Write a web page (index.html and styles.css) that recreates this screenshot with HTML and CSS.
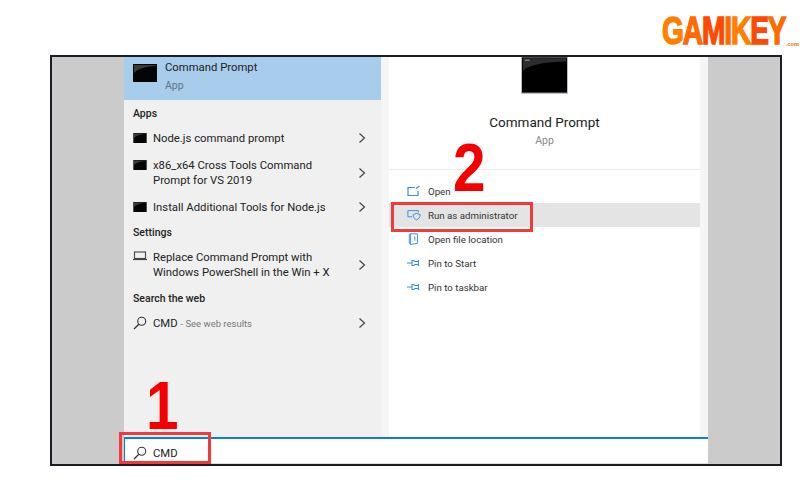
FILE: index.html
```html
<!DOCTYPE html>
<html lang="en">
<head>
    <meta charset="UTF-8">
    <title>Run Command Prompt as administrator</title>
    <link rel="stylesheet" href="styles.css">
</head>
<body>
    <svg class="sprites" width="0" height="0">
        <symbol id="console" viewBox="0 0 24 18">
            <rect width="24" height="18" fill="#050505"/>
            <path d="M1 9C6 4 14 2.500 23 2V1H1z" fill="#3a3a3a"/>
        </symbol>
        <symbol id="chevron" viewBox="0 0 8 12">
            <path d="M1.500 1.500 6.500 6l-5 4.500" fill="none" stroke="#444" stroke-width="1.200"/>
        </symbol>
        <symbol id="search" viewBox="0 0 14 14">
            <circle cx="8.700" cy="5.300" r="4" fill="none" stroke="#333" stroke-width="1.100"/>
            <path d="M5.800 8.200 1 13" fill="none" stroke="#333" stroke-width="1.300"/>
        </symbol>
        <symbol id="pin" viewBox="0 0 14 10">
            <path d="M0 5h5M5 2.500h1.500L8 3.500h3.500V2.500M5 7.500h1.500L8 6.500h3.500v1M5 2v6M11.500 2v6" fill="none" stroke="#3a8fdc" stroke-width="1.100"/>
        </symbol>
    </svg>

    <header class="brand">
        <div class="logo">
            <div class="logo-word"><span class="c1">G</span><span class="c2">A</span><span class="c3">M</span><span class="c2">I</span><span class="c1">K</span><span class="c3">E</span><span class="c2">Y</span></div>
            <small>.com</small>
        </div>
    </header>

    <main class="frame">
        <div class="start">
            <div class="panels">
                <section class="results">
                    <div class="best">
                        <svg class="best-icon"><use href="#console"/></svg>
                        <div>
                            <div class="best-name">Command Prompt</div>
                            <div class="best-type">App</div>
                        </div>
                    </div>

                    <h4>Apps</h4>
                    <div class="row">
                        <svg class="row-icon"><use href="#console"/></svg>
                        <span class="row-text">Node.js command prompt</span>
                        <svg class="chevron"><use href="#chevron"/></svg>
                    </div>
                    <div class="row tall">
                        <svg class="row-icon top"><use href="#console"/></svg>
                        <span class="row-text">x86_x64 Cross Tools Command<br>Prompt for VS 2019</span>
                        <svg class="chevron"><use href="#chevron"/></svg>
                    </div>
                    <div class="row last">
                        <svg class="row-icon"><use href="#console"/></svg>
                        <span class="row-text">Install Additional Tools for Node.js</span>
                        <svg class="chevron"><use href="#chevron"/></svg>
                    </div>

                    <h4>Settings</h4>
                    <div class="row tall">
                        <svg class="row-icon top" viewBox="0 0 14 10">
                            <rect x="1.500" y="1" width="11" height="6.500" fill="none" stroke="#444" stroke-width="1.100"/>
                            <path d="M0 8.500h14" stroke="#444" stroke-width="1.200"/>
                        </svg>
                        <span class="row-text">Replace Command Prompt with<br>Windows PowerShell in the Win + X</span>
                        <svg class="chevron"><use href="#chevron"/></svg>
                    </div>

                    <h4>Search the web</h4>
                    <div class="row">
                        <svg class="row-icon glass"><use href="#search"/></svg>
                        <span class="row-text">CMD <em>- See web results</em></span>
                        <svg class="chevron"><use href="#chevron"/></svg>
                    </div>
                </section>

                <section class="details">
                    <div class="preview">
                        <svg class="preview-icon" viewBox="0 0 47 37">
                            <rect width="47" height="37" fill="#000"/>
                            <path d="M1 14C9 7 26 5 46 4.500V1H1z" fill="#2c2c2c"/>
                            <path d="M3 3h5" stroke="#aaa"/>
                        </svg>
                        <div class="preview-name">Command Prompt</div>
                        <div class="preview-type">App</div>
                    </div>
                    <ul class="actions">
                        <li>
                            <svg viewBox="0 0 14 12"><path d="M8 2.500H1v8h10V6M9 3.500 12.500 1" fill="none" stroke="#3a8fdc" stroke-width="1.200"/></svg>
                            Open
                        </li>
                        <li class="active">
                            <svg viewBox="0 0 16 12"><path d="M6 8H1V1h12v2" fill="none" stroke="#3a8fdc" stroke-width="1.100"/><path d="M7 5.500 11 4l4 1.500c0 3-1.500 5-4 6-2.500-1-4-3-4-6z" fill="none" stroke="#3a8fdc" stroke-width="1.100"/></svg>
                            Run as administrator
                        </li>
                        <li>
                            <svg viewBox="0 0 14 14"><path d="M3 1h8v11l-8 1.500zM3 1 1.500 2v10L3 13.500M7 5l1-.5V9" fill="none" stroke="#3a8fdc" stroke-width="1.100"/></svg>
                            Open file location
                        </li>
                        <li><svg><use href="#pin"/></svg>Pin to Start</li>
                        <li><svg><use href="#pin"/></svg>Pin to taskbar</li>
                    </ul>
                </section>
            </div>
            <div class="searchbar">
                <svg class="glass"><use href="#search"/></svg>
                <span>CMD</span>
            </div>
        </div>

        <div class="step step-one">1</div>
        <div class="step step-two">2</div>
        <div class="mark mark-one"></div>
        <div class="mark mark-two"></div>
    </main>
</body>
</html>
```
FILE: styles.css
```css
* {
    box-sizing: border-box;
}

body {
    margin: 0;
    width: 800px;
    height: 500px;
    overflow: hidden;
    background: #fff;
    font-family: Roboto, sans-serif;
    color: #222;
}

.sprites {
    position: absolute;
}

.brand {
    height: 55px;
    display: flex;
    justify-content: flex-end;
    padding: 15px 1px 0 0;
}

.logo {
    width: 137px;
    height: 36px;
    display: flex;
    align-items: flex-end;
}

.logo-word {
    width: 124px;
    flex: none;
    font-family: "Liberation Sans", sans-serif;
    font-weight: 700;
    font-size: 39px;
    line-height: 40px;
    letter-spacing: -1.500px;
    white-space: nowrap;
    -webkit-text-stroke: 1.500px currentColor;
    transform: scaleX(.72);
    transform-origin: left center;
}

.logo small {
    font-family: "Liberation Sans", sans-serif;
    font-weight: 700;
    font-size: 5.500px;
    line-height: 8px;
    margin-bottom: 3px;
    color: #f26a00;
}

.c1 {
    color: #ff8000;
}

.c2 {
    color: #ff6a00;
}

.c3 {
    color: #ff4800;
}

.frame {
    position: relative;
    margin-left: 50px;
    width: 732px;
    height: 411px;
    background: #cbcbcb;
    border: 2px solid #1c1c24;
    padding-left: 72px;
    padding-right: 72px;
}

.start {
    height: 100%;
    display: flex;
    flex-direction: column;
}

.panels {
    flex: 1;
    display: flex;
    background: #f5f5f5;
}

.results {
    width: 257px;
    background: #f0f0f0;
}

.best {
    height: 43px;
    background: #a8cceb;
    display: flex;
    padding-left: 9px;
    gap: 8px;
}

.best-icon {
    width: 24px;
    height: 18px;
    margin-top: 7px;
}

.best-name {
    font-size: 11.300px;
    line-height: 18px;
    margin-top: 2px;
}

.best-type {
    font-size: 10.500px;
    line-height: 18px;
    color: #5f7486;
}

h4 {
    margin: 0;
    height: 26px;
    padding-left: 9px;
    font-size: 10.500px;
    font-weight: 500;
    line-height: 28px;
}

.row {
    height: 24px;
    display: flex;
    align-items: center;
    padding-left: 9px;
    font-size: 11.300px;
    line-height: 15px;
}

.row.tall {
    height: 44px;
    padding-top: 2px;
}

.row.last {
    height: 25px;
    padding-top: 1px;
}

.results h4 + .row.tall {
    height: 40px;
    padding-top: 0;
}

.row-icon {
    width: 14px;
    height: 10px;
    margin-right: 6px;
    flex: none;
}

.row-icon.top {
    align-self: flex-start;
    margin-top: 8px;
}

.results h4 + .row.tall .row-icon.top {
    margin-top: 6px;
}

.row-icon.glass {
    height: 14px;
}

.row-text {
    flex: 1;
}

.row-text em {
    font-style: normal;
    font-size: 9.500px;
    color: #777;
}

.chevron {
    width: 8px;
    height: 12px;
    margin-right: 15px;
    flex: none;
}

.details {
    width: 311px;
    margin-left: 8px;
    background: #fff;
}

.preview {
    height: 113px;
    border-bottom: 1px solid #ececec;
    display: flex;
    flex-direction: column;
    align-items: center;
}

.preview-icon {
    width: 47px;
    height: 37px;
    border: 1px solid #b8bec8;
    border-top: 0;
}

.preview-name {
    margin-top: 18px;
    font-size: 13.500px;
    line-height: 20px;
    color: #1a1a1a;
}

.preview-type {
    margin-top: 1px;
    font-size: 10.500px;
    line-height: 16px;
    color: #888;
}

.actions {
    list-style: none;
    margin: 0;
    padding: 9px 0 0;
}

.actions li {
    height: 24px;
    display: flex;
    align-items: center;
    gap: 7px;
    padding-left: 18px;
    font-size: 9.700px;
    color: #333;
}

.actions li.active {
    background: #e4e4e4;
}

.actions svg {
    width: 14px;
    height: 12px;
    flex: none;
}

.searchbar {
    height: 27px;
    background: #fff;
    border-top: 2px solid #0a7fe0;
    border-left: 1px solid #0a7fe0;
    border-bottom: 1px solid #ddd;
    display: flex;
    align-items: center;
    gap: 6px;
    padding: 4px 0 0 8px;
    font-size: 11.300px;
}

.searchbar .glass {
    width: 14px;
    height: 14px;
}

.step {
    position: absolute;
    font-family: "Liberation Sans", sans-serif;
    font-weight: 700;
    font-size: 68px;
    line-height: 68px;
    color: #f40000;
    transform: scaleX(.86);
    transform-origin: left center;
}

.step-one {
    left: 94px;
    top: 314px;
}

.step-two {
    left: 401px;
    top: 76px;
}

.mark {
    position: absolute;
    border: 3px solid #f23a3a;
}

.mark-one {
    left: 67px;
    top: 375px;
    width: 92px;
    height: 32px;
}

.mark-two {
    left: 339px;
    top: 145px;
    width: 142px;
    height: 30px;
}
```
